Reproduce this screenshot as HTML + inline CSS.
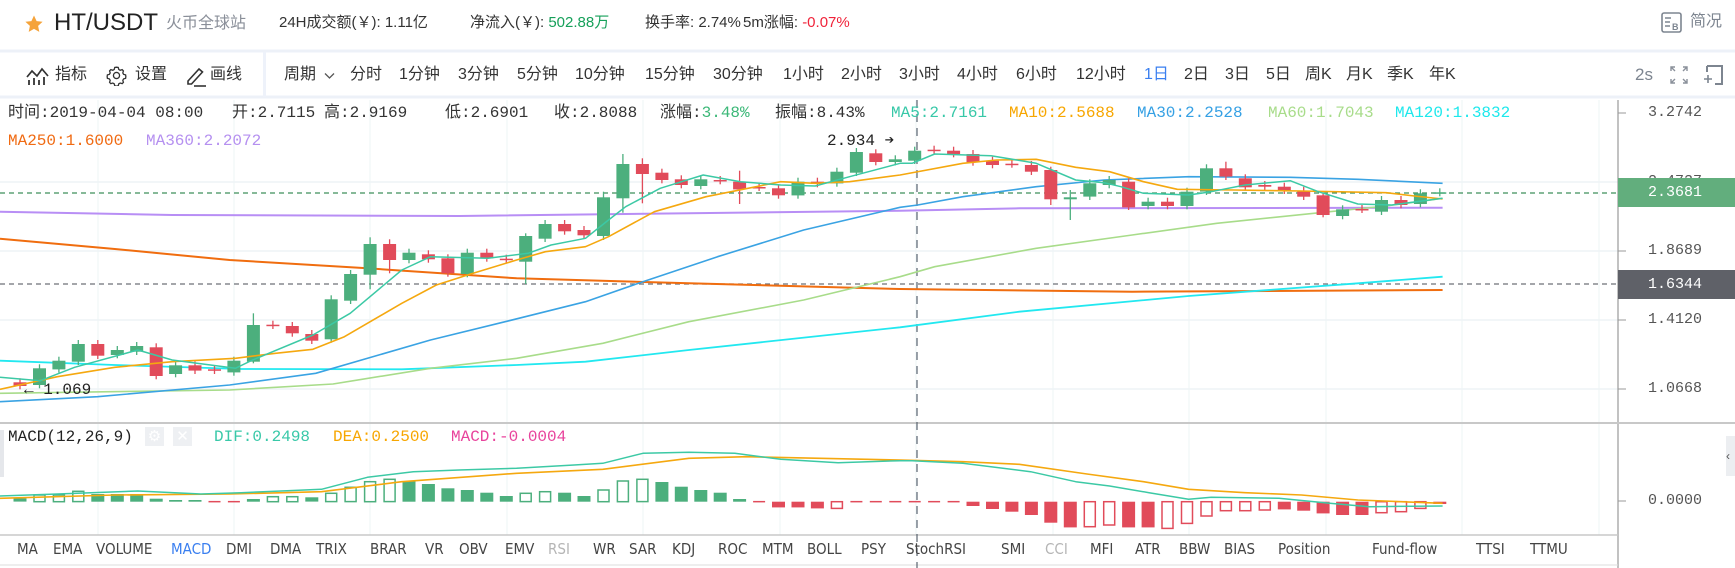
<!DOCTYPE html>
<html><head><meta charset="utf-8">
<style>
*{margin:0;padding:0;box-sizing:border-box}
body{width:1735px;height:568px;background:#fff;position:relative;overflow:hidden;font-family:"Liberation Sans","Noto Sans CJK SC",sans-serif;color:#333}
.a{position:absolute;white-space:nowrap}
.h{top:12px;font-size:15px;line-height:22px}
.t{top:64px;font-size:16px;line-height:22px;color:#333}
.m{font-family:"Liberation Mono","DejaVu Sans Mono","Noto Sans CJK SC",monospace;font-size:16px;line-height:18px}
.tab{top:540px;font-size:15px;line-height:18px;color:#444;font-family:"DejaVu Sans Condensed","Liberation Sans",sans-serif}
.ax{font-family:"Liberation Mono","DejaVu Sans Mono",monospace;font-size:15px;color:#555;left:1648px;line-height:18px}
</style></head><body>
<svg id="s" class="a" style="left:0;top:0" width="1735" height="568"></svg>

<svg class="a" style="left:24px;top:14px" width="20" height="20" viewBox="0 0 20 20"><path d="M10 1.5l2.6 5.6 6 .7-4.5 4.1 1.2 6L10 14.9l-5.3 3 1.2-6L1.4 7.8l6-.7z" fill="#f5a33a"/></svg>
<div class="a" style="left:54px;top:9px;font-size:24px;line-height:28px;color:#222">HT/USDT</div>
<div class="a" style="left:166px;top:13px;font-size:16px;line-height:22px;color:#8a8f99">火币全球站</div>
<div class="a h" style="left:279px">24H成交额(￥): 1.11亿</div>
<div class="a h" style="left:470px">净流入(￥): <span style="color:#16a05a">502.88万</span></div>
<div class="a h" style="left:645px">换手率: 2.74%</div>
<div class="a h" style="left:743px">5m涨幅: <span style="color:#f0233a">-0.07%</span></div>
<svg class="a" style="left:1661px;top:12px" width="22" height="21" viewBox="0 0 22 21"><rect x="1" y="1" width="19" height="19" rx="2" fill="none" stroke="#7d8590" stroke-width="1.6"/><path d="M4 6h6M4 10h5M4 14h5" stroke="#7d8590" stroke-width="1.5"/><text x="11" y="18" font-size="9" font-family="Liberation Sans" font-weight="bold" fill="#7d8590">B</text></svg>
<div class="a" style="left:1690px;top:11px;font-size:16px;line-height:22px;color:#7d8590">简况</div>

<svg class="a" style="left:26px;top:66px" width="23" height="20" viewBox="0 0 23 20"><path d="M1 11l5-6 5 5 5-7 6 7" fill="none" stroke="#333" stroke-width="1.7"/><path d="M3 14v5M8 12v7M13 14v5M18 11v8" stroke="#333" stroke-width="1.8"/></svg>
<div class="a t" style="left:55px">指标</div>
<svg class="a" style="left:106px;top:65px" width="21" height="21" viewBox="0 0 24 24"><path d="M12 2.5l2 .3.6 2.3 1.6.9 2.3-.7 1.4 1.5-.7 2.3.9 1.6 2.3.6.3 2-.3 2-2.3.6-.9 1.6.7 2.3-1.4 1.5-2.3-.7-1.6.9-.6 2.3-2 .3-2-.3-.6-2.3-1.6-.9-2.3.7-1.4-1.5.7-2.3-.9-1.6-2.3-.6-.3-2 .3-2 2.3-.6.9-1.6-.7-2.3 1.4-1.5 2.3.7 1.6-.9.6-2.3z" fill="none" stroke="#333" stroke-width="1.5"/><circle cx="12" cy="12" r="3.5" fill="none" stroke="#333" stroke-width="1.5"/></svg>
<div class="a t" style="left:135px">设置</div>
<svg class="a" style="left:185px;top:65px" width="22" height="22" viewBox="0 0 22 22"><path d="M3 16L14 4l3.5 3L6.5 19H3z" fill="none" stroke="#333" stroke-width="1.6"/><path d="M9 21h12" stroke="#333" stroke-width="1.6"/></svg>
<div class="a t" style="left:210px">画线</div>
<div class="a" style="left:263px;top:52px;width:3px;height:45px;background:#eef2fa"></div>
<div class="a t" style="left:284px">周期</div>
<svg class="a" style="left:324px;top:72px" width="11" height="8" viewBox="0 0 11 8"><path d="M1 1.5l4.5 4.5 4.5-4.5" fill="none" stroke="#555" stroke-width="1.3"/></svg>
<div class="a t" style="left:350px">分时</div>
<div class="a t" style="left:399px">1分钟</div>
<div class="a t" style="left:458px">3分钟</div>
<div class="a t" style="left:517px">5分钟</div>
<div class="a t" style="left:575px">10分钟</div>
<div class="a t" style="left:645px">15分钟</div>
<div class="a t" style="left:713px">30分钟</div>
<div class="a t" style="left:783px">1小时</div>
<div class="a t" style="left:841px">2小时</div>
<div class="a t" style="left:899px">3小时</div>
<div class="a t" style="left:957px">4小时</div>
<div class="a t" style="left:1016px">6小时</div>
<div class="a t" style="left:1076px">12小时</div>
<div class="a t" style="left:1144px;color:#3a7ff0">1日</div>
<div class="a t" style="left:1184px">2日</div>
<div class="a t" style="left:1225px">3日</div>
<div class="a t" style="left:1266px">5日</div>
<div class="a t" style="left:1305px">周K</div>
<div class="a t" style="left:1346px">月K</div>
<div class="a t" style="left:1387px">季K</div>
<div class="a t" style="left:1429px">年K</div>
<div class="a t" style="left:1635px;color:#7d8590;font-size:17px">2s</div>
<svg class="a" style="left:1669px;top:65px" width="20" height="20" viewBox="0 0 20 20"><path d="M2 6V2h4M2 2l4 4M18 6V2h-4M18 2l-4 4M2 14v4h4M2 18l4-4M18 14v4h-4M18 18l-4-4" fill="none" stroke="#8a909a" stroke-width="1.4"/></svg>
<svg class="a" style="left:1702px;top:64px" width="22" height="22" viewBox="0 0 22 22"><path d="M5 2h15v18h-7M5 2v6" fill="none" stroke="#7d8590" stroke-width="2"/><path d="M2 15h8M6 11v8" stroke="#7d8590" stroke-width="1.6"/></svg>

<div class="a m" style="left:8px;top:104px">时间:2019-04-04 08:00</div>
<div class="a m" style="left:232px;top:104px">开:2.7115</div>
<div class="a m" style="left:324px;top:104px">高:2.9169</div>
<div class="a m" style="left:445px;top:104px">低:2.6901</div>
<div class="a m" style="left:554px;top:104px">收:2.8088</div>
<div class="a m" style="left:660px;top:104px">涨幅:<span style="color:#3cb878">3.48%</span></div>
<div class="a m" style="left:775px;top:104px">振幅:8.43%</div>
<div class="a m" style="left:891px;top:104px;color:#38c8a8">MA5:2.7161</div>
<div class="a m" style="left:1009px;top:104px;color:#f7a600">MA10:2.5688</div>
<div class="a m" style="left:1137px;top:104px;color:#35a0e4">MA30:2.2528</div>
<div class="a m" style="left:1268px;top:104px;color:#a8dc8a">MA60:1.7043</div>
<div class="a m" style="left:1395px;top:104px;color:#1ee8ec">MA120:1.3832</div>
<div class="a m" style="left:8px;top:132px;color:#f06a12">MA250:1.6000</div>
<div class="a m" style="left:146px;top:132px;color:#b590f0">MA360:2.2072</div>
<div class="a m" style="left:827px;top:132px;color:#222">2.934 ➔</div>
<div class="a m" style="left:24px;top:381px;color:#222">← 1.069</div>

<div class="a ax" style="top:104px">3.2742</div>
<div class="a ax" style="top:173px">2.4737</div>
<div class="a" style="left:1618px;top:178px;width:117px;height:29px;background:#62ae7d"></div>
<div class="a ax" style="top:184px;color:#fff">2.3681</div>
<div class="a ax" style="top:242px">1.8689</div>
<div class="a" style="left:1618px;top:270px;width:117px;height:29px;background:#5f6168"></div>
<div class="a ax" style="top:276px;color:#fff">1.6344</div>
<div class="a ax" style="top:311px">1.4120</div>
<div class="a ax" style="top:380px">1.0668</div>
<div class="a ax" style="top:492px">0.0000</div>

<div class="a m" style="left:8px;top:428px;color:#222">MACD(12,26,9)</div>
<div class="a" style="left:145px;top:427px;width:19px;height:19px;background:#eef0f3;color:#fff;font-size:15px;text-align:center;line-height:19px">⚙</div>
<div class="a" style="left:173px;top:427px;width:19px;height:19px;background:#eef0f3;color:#fff;font-size:15px;text-align:center;line-height:19px">✕</div>
<div class="a m" style="left:214px;top:428px;color:#38c8a8">DIF:0.2498</div>
<div class="a m" style="left:333px;top:428px;color:#f7a600">DEA:0.2500</div>
<div class="a m" style="left:451px;top:428px;color:#e8439c">MACD:-0.0004</div>
<div class="a" style="left:0;top:430px;width:4px;height:47px;background:#e5e7eb"></div>
<div class="a" style="left:1726px;top:436px;width:9px;height:40px;background:#eceef1;font-size:12px;color:#555;line-height:40px">‹</div>

<div class="a tab" style="left:17px">MA</div>
<div class="a tab" style="left:53px">EMA</div>
<div class="a tab" style="left:96px">VOLUME</div>
<div class="a tab" style="left:171px;color:#3a7ff0">MACD</div>
<div class="a tab" style="left:226px">DMI</div>
<div class="a tab" style="left:270px">DMA</div>
<div class="a tab" style="left:316px">TRIX</div>
<div class="a tab" style="left:370px">BRAR</div>
<div class="a tab" style="left:425px">VR</div>
<div class="a tab" style="left:459px">OBV</div>
<div class="a tab" style="left:505px">EMV</div>
<div class="a tab" style="left:548px;color:#b5b5b5">RSI</div>
<div class="a tab" style="left:593px">WR</div>
<div class="a tab" style="left:629px">SAR</div>
<div class="a tab" style="left:672px">KDJ</div>
<div class="a tab" style="left:718px">ROC</div>
<div class="a tab" style="left:762px">MTM</div>
<div class="a tab" style="left:807px">BOLL</div>
<div class="a tab" style="left:861px">PSY</div>
<div class="a tab" style="left:906px">StochRSI</div>
<div class="a tab" style="left:1001px">SMI</div>
<div class="a tab" style="left:1045px;color:#b5b5b5">CCI</div>
<div class="a tab" style="left:1090px">MFI</div>
<div class="a tab" style="left:1135px">ATR</div>
<div class="a tab" style="left:1179px">BBW</div>
<div class="a tab" style="left:1224px">BIAS</div>
<div class="a tab" style="left:1278px">Position</div>
<div class="a tab" style="left:1372px">Fund-flow</div>
<div class="a tab" style="left:1476px">TTSI</div>
<div class="a tab" style="left:1530px">TTMU</div>

<script>
var s=document.getElementById('s'),h='';
function L(x1,y1,x2,y2,c,w,d){h+='<line x1="'+x1+'" y1="'+y1+'" x2="'+x2+'" y2="'+y2+'" stroke="'+c+'" stroke-width="'+(w||1)+'"'+(d?' stroke-dasharray="'+d+'"':'')+'/>';}
function R(x,y,w,hh,f,st){h+='<rect x="'+x+'" y="'+y+'" width="'+w+'" height="'+hh+'" fill="'+f+'"'+(st?' stroke="'+st+'" stroke-width="1.5"':'')+'/>';}
L(0,51,1735,51,'#edf1f8',3);L(0,97,1735,97,'#edf1f8',3);
[98,234,370,507,643,780,916,1053,1189,1326,1462,1599].forEach(function(x){L(x,100,x,535,'#eef4f6',1);});
[182,251,320,389].forEach(function(y){L(0,y,1618,y,'#eef3f6',1.5);});
L(1618,100,1618,568,'#999',1.2);
[113,182,251,320,389,501].forEach(function(y){L(1618,y,1626,y,'#999',1);});
L(0,423,1735,423,'#c8c8c8',2);L(0,535,1618,535,'#c8c8c8',1.5);L(0,565,1618,565,'#ddd',1);
L(0,193,1618,193,'#3d8f5a',1.2,'5,4');L(0,284,1618,284,'#6d7078',1.2,'5,4');
L(917,100,917,568,'#5a6470',1.2,'8,6');
function conv(pts,first,base){return pts.map(function(p){return [first?p[0]/1.742:850+p[0]/1.772, base+p[1]/3];});}
function poly(a,b,base,c,w){var A=conv(a,true,base),B=conv(b,false,base);var lx=A[A.length-1][0];B=B.filter(function(p){return p[0]>lx+2;});var all=A.concat(B);h+='<polyline points="'+all.map(function(p){return p[0].toFixed(1)+','+p[1].toFixed(1);}).join(' ')+'" fill="none" stroke="'+c+'" stroke-width="'+(w||1.6)+'" stroke-linejoin="round"/>';}
function PL(a,b,c,w){poly(a,b,130,c,w);}
function PM(a,b,c,w){poly(a,b,420,c,w);}
PL([[0,245],[300,255],[800,258],[1200,250],[1568,242]],[[0,243],[300,235],[1050,233]],'#b88ef5',2);
PL([[0,326],[200,357],[400,390],[640,415],[900,445],[1200,460],[1568,477]],[[0,472],[500,485],[1050,480]],'#f06d0f',2);
PL([[0,692],[200,705],[420,717],[700,718],[900,705],[1020,695],[1200,660],[1568,592]],[[0,608],[300,545],[600,498],[900,460],[1050,440]],'#22e8f0',1.8);
PL([[0,790],[400,780],[580,762],[750,715],[900,685],[1050,640],[1200,575],[1400,510],[1568,440]],[[0,472],[150,410],[330,355],[500,315],[650,280],[850,245],[950,228],[1050,205]],'#a8dc8a',1.6);
PL([[0,815],[170,800],[400,765],[550,730],[750,630],[880,575],[1020,515],[1120,455],[1250,380],[1400,300],[1568,232]],[[0,278],[120,225],[200,200],[330,170],[450,150],[600,140],[780,142],[900,148],[1050,160]],'#3aa3e3',1.6);
var C=[['r',757,768],['g',715,765],['g',692,718],['g',642,695],['r',642,677],['g',660,675],['g',648,665],['r',652,738],['g',706,732],['r',706,722],['r',718,722],['g',692,727],['g',585,695],['r',584,587],['r',588,610],['r',612,632],['g',508,628],['g',432,512],['g',342,434],['r',342,390],['g',368,390],['r',373,388],['r',385,430],['g',368,432],['r',368,385],['r',386,390],['g',318,395],['g',282,326],['r',282,304],['r',300,316],['g',202,318],['g',102,205],['r',102,132],['r',128,150],['r',148,165],['g',148,168],['r',150,153],['r',155,178],['r',171,173],['r',175,196],['g',155,196],['r',155,162],['g',125,160],['g',66,128],['r',70,96],['g',88,96],['g',62,92],['r',59,61],['r',62,72],['r',72,97],['r',92,105],['r',101,103],['r',105,125],['r',120,208],['g',202,208],['g',160,200],['g',150,165],['r',155,232],['g',215,228],['r',215,228],['g',185,228],['g',115,185],['r',115,140],['r',145,172],['r',165,170],['r',170,182],['r',182,200],['r',196,255],['g',238,258],['r',237,239],['g',210,245],['r',210,225],['g',190,222],['g',187,189]];
var WK={12:[550,700],18:[322,478],19:[328,430],26:[310,462],30:[185,330],31:[72,248],32:[85,220],37:[122,222],53:[110,225],54:[180,270],57:[145,240],62:[95,150],67:[190,262]};
C.forEach(function(c,i){var x=20+i*19.45,col=c[0]=='g'?'#4caf7d':'#e14b5a';var t=130+c[1]/3,b=130+c[2]/3;var w=WK[i]||[c[1]-12,c[2]+10];L(x.toFixed(1),(130+w[0]/3).toFixed(1),x.toFixed(1),(130+w[1]/3).toFixed(1),col,1.3);R((x-6.5).toFixed(1),t.toFixed(1),13,Math.max(b-t,1.5).toFixed(1),col);});
PL([[0,778],[100,740],[200,712],[300,695],[410,685],[480,670],[545,658],[600,620],[700,520],[760,465],[820,432],[900,390],[950,365],[1020,350],[1060,320],[1140,245],[1230,200],[1360,155],[1420,160],[1480,155],[1568,135]],[[0,152],[80,138],[200,100],[260,90],[330,88],[400,112],[460,125],[520,155],[580,178],[680,180],[800,183],[950,188],[1000,198],[1050,207]],'#f5a80f',1.6);
PL([[0,742],[70,752],[130,712],[240,660],[300,690],[410,715],[440,690],[545,615],[610,550],[700,420],[750,380],[850,385],[920,370],[960,345],[1020,325],[1060,270],[1090,230],[1150,175],[1225,135],[1290,155],[1360,165],[1420,168],[1480,140],[1568,100]],[[0,150],[40,125],[110,100],[150,72],[250,77],[330,100],[400,150],[450,158],[480,170],[520,190],[600,195],[640,185],[700,165],[780,152],[830,185],[900,222],[960,225],[1050,205]],'#3cc9a5',1.5);
var Hh=[[235,1],[225,0],[225,0],[214,0],[222,1],[222,1],[222,1],[236,1],[240,1],[240,1],['D'],['D'],[237,1],[230,0],[230,0],[232,1],[220,0],[202,0],[185,0],[178,0],[183,1],[192,1],[205,1],[210,1],[218,1],[228,1],[220,0],[215,0],[218,1],[228,1],[210,0],[183,0],[178,0],[186,1],[200,1],[210,1],[218,1],[237,1],['D'],[262,1],[262,1],[265,1],[265,0],['D'],['D'],['D'],['D'],['D'],['D'],[258,1],[267,1],[275,1],[285,1],[308,1],[322,1],[320,0],[315,0],[322,1],[322,1],[325,0],[310,0],[288,0],[272,0],[272,0],[270,0],[268,1],[272,1],[280,1],[285,1],[285,1],[278,0],[275,0],[265,0],[252,1]];
var z0=420+245/3;
Hh.forEach(function(v,i){var x=20+i*19.45;if(v[0]=='D'){L((x-6).toFixed(1),z0,(x+6).toFixed(1),z0,'#e14b5a',1.5);return;}var y=420+v[0]/3;var col=y<z0?'#4caf7d':'#e14b5a';var t=Math.min(y,z0),hh=Math.max(Math.abs(y-z0),1.5);if(v[1])R((x-6.5).toFixed(1),t.toFixed(1),13,hh.toFixed(1),col);else R((x-5.5).toFixed(1),t.toFixed(1),11,hh.toFixed(1),'#fff',col);});
PM([[0,235],[200,225],[400,222],[560,215],[700,185],[900,160],[1050,148],[1200,115],[1300,110],[1568,120]],[[0,122],[200,125],[300,133],[420,162],[520,185],[600,208],[700,218],[800,225],[900,240],[1050,250]],'#f5a80f',1.6);
PM([[0,228],[100,222],[240,213],[350,222],[420,218],[500,212],[560,208],[640,172],[720,155],[800,150],[900,145],[1000,135],[1050,130],[1120,100],[1200,97],[1280,100],[1360,118],[1460,128],[1568,122]],[[0,125],[110,122],[200,130],[320,155],[400,185],[460,198],[530,218],[600,238],[640,232],[760,235],[850,250],[920,260],[1050,258]],'#3cc9a5',1.5);
s.innerHTML=h;
</script>
</body></html>
